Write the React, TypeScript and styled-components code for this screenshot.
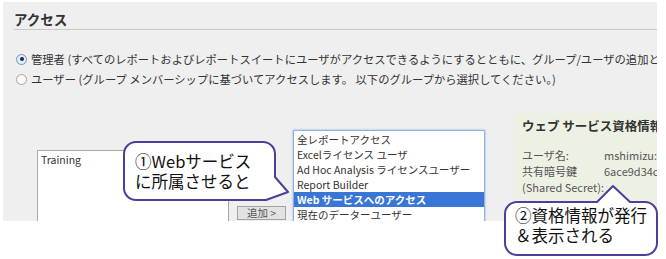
import styled, { createGlobalStyle } from "styled-components";

const GlobalStyle = createGlobalStyle`
  html, body {
    margin: 0;
    padding: 0;
    background: #ffffff;
  }
  body {
    font-family: "Noto Sans CJK JP", "Noto Sans", sans-serif;
  }
`;

const Stage = styled.div`
  position: relative;
  width: 666px;
  height: 259px;
  overflow: hidden;
`;

const Shot = styled.div`
  margin: 2px 0 0 3px;
  width: 654px;
  height: 219px;
  box-sizing: border-box;
  padding-left: 11px;
  background: #efefef;
  overflow: hidden;
`;

const Heading = styled.h2`
  margin: 0;
  padding: 8px 0 1px;
  line-height: 18px;
  font-size: 13.5px;
  font-weight: 700;
  color: #333333;
  border-bottom: 1px solid #c9c9c9;
`;

const RadioList = styled.div`
  margin-top: 19px;
  display: flex;
  flex-direction: column;
`;

const RadioRow = styled.label`
  display: flex;
  align-items: center;
  height: 20px;
  gap: 4px;
  font-size: 11.3px;
  color: #333333;
  white-space: nowrap;
`;

const RadioDot = styled.span<{ $checked?: boolean }>`
  margin-left: 2px;
  width: 11px;
  height: 11px;
  box-sizing: border-box;
  border-radius: 50%;
  flex: none;
  display: flex;
  align-items: center;
  justify-content: center;
  border: 1px solid ${(p) => (p.$checked ? "#6f95c8" : "#a5a5a5")};
  background: ${(p) => (p.$checked ? "#e3ecf8" : "#f8f8f8")};
  &::after {
    content: "";
    width: 4px;
    height: 4px;
    border-radius: 50%;
    background: ${(p) => (p.$checked ? "#1d2a44" : "transparent")};
  }
`;

const Lower = styled.div`
  margin-top: 24px;
  padding-left: 23px;
  display: flex;
  align-items: flex-start;
`;

const ListBox = styled.div<{ $top: number; $focus?: boolean }>`
  margin-top: ${(p) => p.$top}px;
  width: 192px;
  height: 110px;
  flex: none;
  box-sizing: border-box;
  background: #ffffff;
  border: 1px solid ${(p) => (p.$focus ? "#8fb2dc" : "#a9a9a9")};
  box-shadow: ${(p) => (p.$focus ? "0 0 2px #8cb1e0" : "none")};
  padding-top: 1px;
  font-size: 10.5px;
  color: #333333;
`;

const ListItem = styled.div<{ $selected?: boolean }>`
  height: 15px;
  line-height: 15px;
  padding-left: 3px;
  white-space: nowrap;
  background: ${(p) => (p.$selected ? "#3a76d6" : "transparent")};
  color: ${(p) => (p.$selected ? "#ffffff" : "#333333")};
  font-weight: ${(p) => (p.$selected ? 700 : 400)};
`;

const AddButton = styled.button`
  margin: 93px 7px 0 8px;
  width: 49px;
  height: 14px;
  flex: none;
  padding: 0;
  border: 1px solid #a3a3a3;
  background: #e2e2e2;
  font-family: inherit;
  font-size: 10.5px;
  line-height: 12px;
  color: #555555;
`;

const CredPanel = styled.div`
  margin-left: 29px;
  flex: 1;
  height: 110px;
  box-sizing: border-box;
  padding: 4px 0 0 8px;
  background: #edf1e4;
  overflow: hidden;
  white-space: nowrap;
`;

const CredTitle = styled.div`
  font-size: 12.5px;
  font-weight: 700;
  line-height: 17px;
  color: #333333;
  margin-bottom: 13px;
`;

const CredRow = styled.div`
  display: flex;
  font-size: 11px;
  line-height: 16px;
  color: #555555;
`;

const CredLabel = styled.span`
  width: 82px;
  flex: none;
`;

const Callout = styled.div<{ $left: number; $top: number; $w: number; $h: number; $pad: string }>`
  position: absolute;
  left: ${(p) => p.$left}px;
  top: ${(p) => p.$top}px;
  width: ${(p) => p.$w}px;
  height: ${(p) => p.$h}px;
  box-sizing: border-box;
  padding: ${(p) => p.$pad};
  font-size: 16.5px;
  line-height: 20px;
  color: #111111;
  white-space: nowrap;
  svg {
    position: absolute;
    left: 0;
    top: 0;
  }
`;

const CalloutText = styled.div`
  position: relative;
`;

function Bubble({
  left,
  top,
  w,
  h,
  pad,
  d,
  children,
}: {
  left: number;
  top: number;
  w: number;
  h: number;
  pad: string;
  d: string;
  children: React.ReactNode;
}) {
  return (
    <Callout $left={left} $top={top} $w={w} $h={h} $pad={pad}>
      <svg width={w} height={h} viewBox={`0 0 ${w} ${h}`}>
        <path d={d} fill="#ffffff" stroke="#4b3f99" strokeWidth="2" strokeLinejoin="round" />
      </svg>
      <CalloutText>{children}</CalloutText>
    </Callout>
  );
}

const groups = [
  "全レポートアクセス",
  "Excelライセンス ユーザ",
  "Ad Hoc Analysis ライセンスユーザー",
  "Report Builder",
  "Web サービスへのアクセス",
  "現在のデーターユーザー",
  "管理者",
];

export default function App() {
  return (
    <>
      <GlobalStyle />
      <Stage>
        <Shot>
          <Heading>アクセス</Heading>
          <RadioList>
            <RadioRow>
              <RadioDot $checked />
              管理者 (すべてのレポートおよびレポートスイートにユーザがアクセスできるようにするとともに、グループ/ユーザの追加と管理を許可します。)
            </RadioRow>
            <RadioRow>
              <RadioDot />
              ユーザー (グループ メンバーシップに基づいてアクセスします。 以下のグループから選択してください。)
            </RadioRow>
          </RadioList>
          <Lower>
            <ListBox $top={37}>
              <ListItem>Training</ListItem>
            </ListBox>
            <AddButton>追加 &gt;</AddButton>
            <ListBox $top={17} $focus>
              {groups.map((g, i) => (
                <ListItem key={g} $selected={i === 4}>
                  {g}
                </ListItem>
              ))}
            </ListBox>
            <CredPanel>
              <CredTitle>ウェブ サービス資格情報</CredTitle>
              <CredRow>
                <CredLabel>ユーザ名:</CredLabel>
                mshimizu:eBay
              </CredRow>
              <CredRow>
                <CredLabel>共有暗号鍵</CredLabel>
                6ace9d34cf2b81e0
              </CredRow>
              <CredRow>
                <CredLabel>(Shared Secret):</CredLabel>
              </CredRow>
            </CredPanel>
          </Lower>
        </Shot>

        <Bubble
          left={120}
          top={138}
          w={172}
          h={66}
          pad="13px 0 0 15px"
          d="M 16 4 H 143 A 12 12 0 0 1 155 16 V 39 L 168 54 L 146 62 H 16 A 12 12 0 0 1 4 50 V 16 A 12 12 0 0 1 16 4 Z"
        >
          ①Webサービス
          <br />
          に所属させると
        </Bubble>

        <Bubble
          left={501}
          top={182}
          w={160}
          h={77}
          pad="23px 0 0 14px"
          d="M 16 20 H 96 L 112 4 L 129 20 H 144 A 12 12 0 0 1 156 32 V 61 A 12 12 0 0 1 144 73 H 16 A 12 12 0 0 1 4 61 V 32 A 12 12 0 0 1 16 20 Z"
        >
          ②資格情報が発行
          <br />
          ＆表示される
        </Bubble>
      </Stage>
    </>
  );
}
